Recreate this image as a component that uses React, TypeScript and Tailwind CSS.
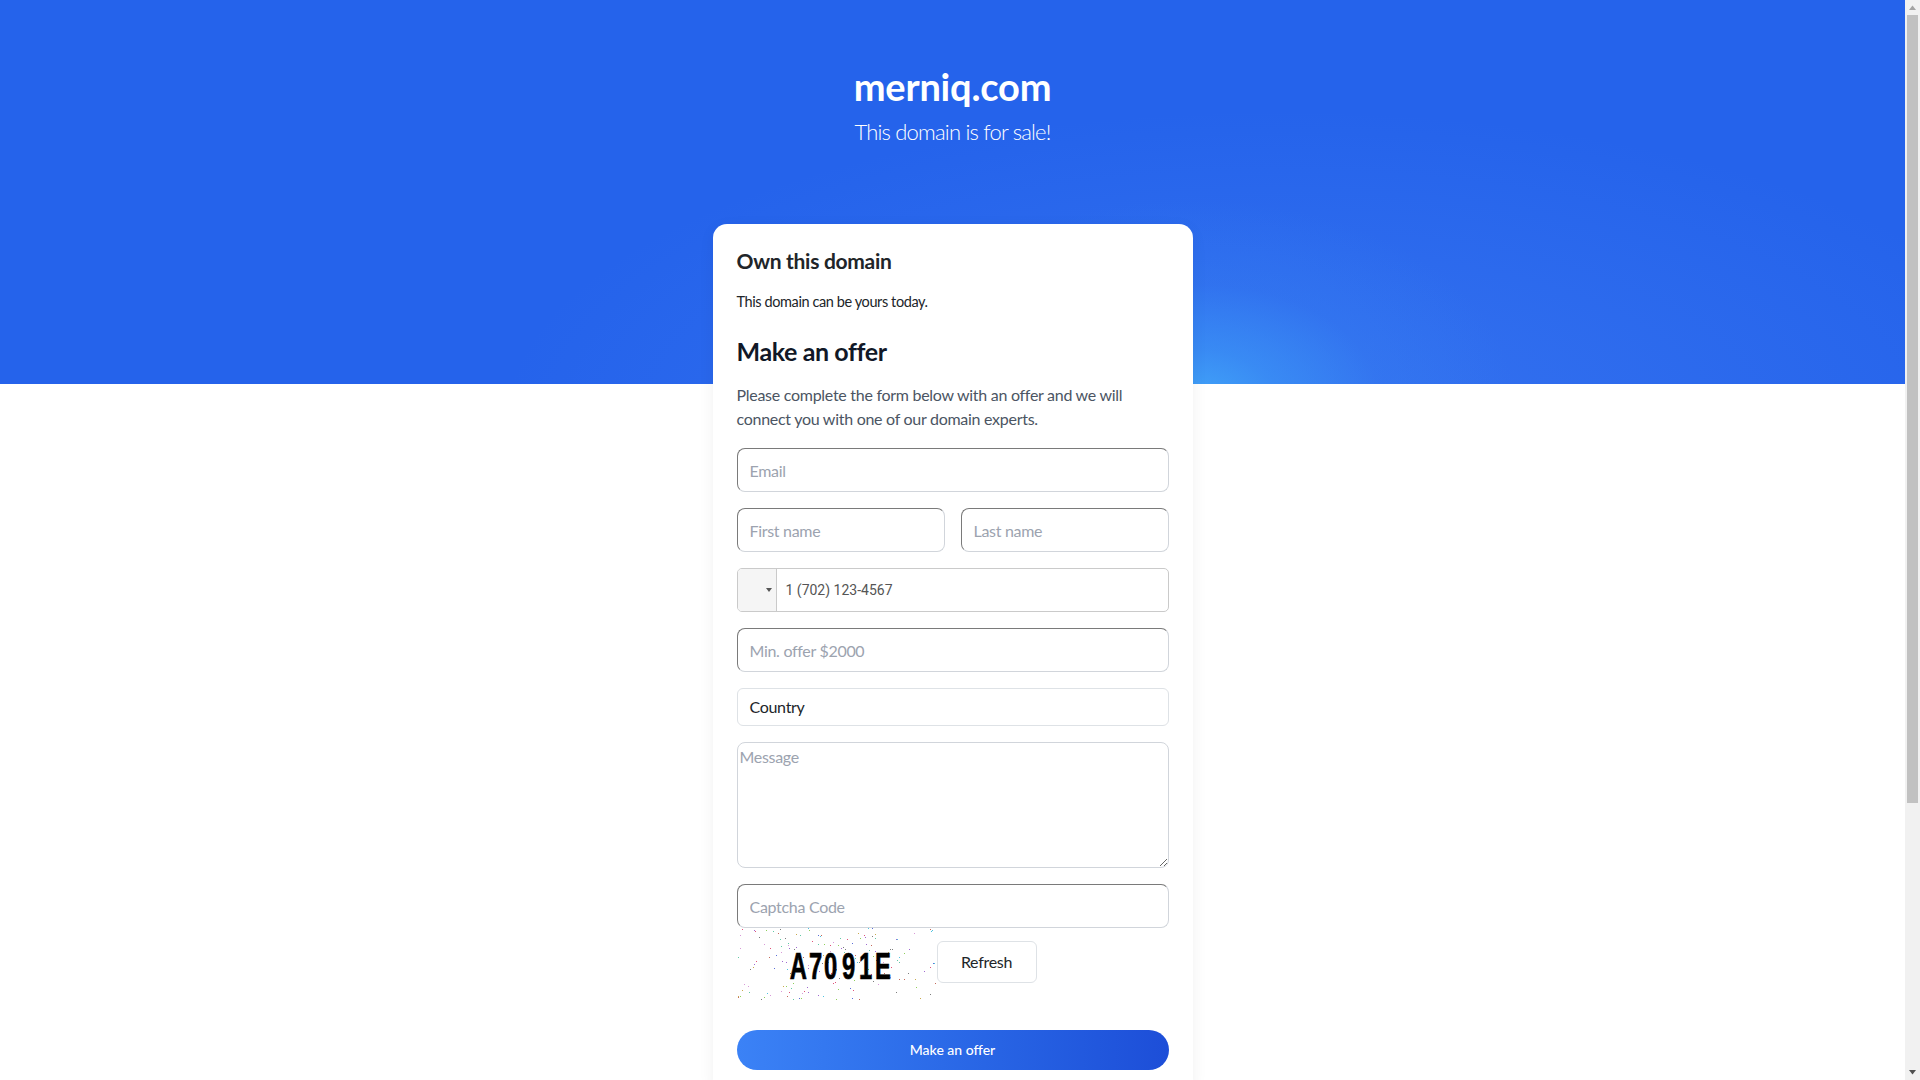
const dotColors = ["#e0527a", "#5b6fd8", "#62c9a5", "#c9a94e", "#a06ad0", "#7d7d7d", "#4fc3e0", "#c46a5a", "#8fd05a", "#d89ad8"];

// captcha speckle, seeded so it stays the same between runs
function makeDots() {
  const dots: { x: number; y: number; c: string }[] = [];
  let seed = 91;
  const next = () => {
    seed = (seed * 16807) % 2147483647;
    return seed / 2147483647;
  };
  for (let i = 0; i < 170; i++) {
    dots.push({
      x: Math.floor(next() * 198) + 1,
      y: Math.floor(next() * 72),
      c: dotColors[Math.floor(next() * dotColors.length)],
    });
  }
  return dots;
}

function Captcha() {
  return (
    <svg width="200" height="74" viewBox="0 0 200 74" className="block shrink-0">
      {makeDots().map((d, i) => (
        <rect key={i} x={d.x} y={d.y} width="1" height="1" fill={d.c} />
      ))}
      <text
        transform="scale(0.66 1)"
        x="80 109 132 159 185 209"
        y="51"
        fontFamily="'Liberation Sans',sans-serif"
        fontWeight="700"
        fontSize="36"
        stroke="#000"
        strokeWidth="0.7"
        fill="#000"
      >
        A7091E
      </text>
    </svg>
  );
}

const inputClass =
  "block w-full h-11 px-3 rounded-lg bg-white border border-t-[#7a7a7a] border-l-[#7a7a7a] border-r-[#d1d5db] border-b-[#d1d5db] text-base tracking-[-0.3px] text-[#212529] outline-none placeholder:text-[#9ca3af]";

export default function App() {
  return (
    <div className="flex h-screen overflow-hidden bg-white [font-family:Lato,sans-serif]">
      <main className="flex-1 min-w-0 overflow-hidden">
        {/* Hero */}
        <section className="h-[384px] pt-[59px] text-center text-white bg-[radial-gradient(ellipse_320px_200px_at_1195px_400px,#41a4f8_0%,rgba(60,150,246,0.7)_25%,rgba(55,130,242,0.3)_58%,rgba(37,99,235,0)_100%),radial-gradient(ellipse_780px_310px_at_1280px_420px,rgba(90,150,250,0.3)_0%,rgba(90,150,250,0.15)_50%,rgba(37,99,235,0)_100%),linear-gradient(#2563eb,#2563eb)]">
          <h1 className="text-[38px] leading-[54px] font-bold tracking-[-0.2px]">merniq.com</h1>
          <p className="mt-[3px] text-[22px] leading-[32px] font-light tracking-[-0.8px]">This domain is for sale!</p>
        </section>

        {/* Card */}
        <div className="w-[480px] mx-auto -mt-[160px] bg-white rounded-t-[14px] rounded-b-xl shadow-[0_4px_16px_rgba(0,0,0,0.06)] px-6 pt-[21px] pb-6">
          <h2 className="text-[21px] leading-[32px] font-bold text-[#212529] tracking-[-0.3px]">Own this domain</h2>
          <p className="mt-[13px] text-[14.5px] leading-6 text-[#212529] tracking-[-0.4px]">This domain can be yours today.</p>
          <h2 className="mt-[19px] text-[25px] leading-[36px] font-bold text-[#111827] tracking-[-0.4px]">Make an offer</h2>
          <p className="mt-[14px] text-base leading-6 text-[#4b5563] tracking-[-0.28px]">
            Please complete the form below with an offer and we will connect you with one of our domain experts.
          </p>

          <form className="mt-[17px] flex flex-col gap-4">
            <input className={inputClass} placeholder="Email" />
            <div className="flex gap-4">
              <input className={inputClass} placeholder="First name" />
              <input className={inputClass} placeholder="Last name" />
            </div>

            {/* Phone */}
            <div className="flex h-11 rounded-[5px] border border-[#cacaca] overflow-hidden">
              <div className="w-[39px] shrink-0 bg-[#f5f5f5] border-r border-[#cacaca] flex items-center justify-end pr-[4px]">
                <span className="w-0 h-0 border-x-[3px] border-x-transparent border-t-[4px] border-t-[#555]" />
              </div>
              <input
                className="flex-1 min-w-0 pl-[9px] text-sm text-[#555] outline-none placeholder:text-[#555] [font-family:Roboto,sans-serif]"
                placeholder="1 (702) 123-4567"
              />
            </div>

            <input className={inputClass} placeholder="Min. offer $2000" />

            {/* Country */}
            <div className="h-[38px] px-3 flex items-center rounded-md border border-[#dee2e6] text-base tracking-[-0.3px] text-[#212529]">Country</div>

            <textarea
              className="block w-full h-[126px] p-[2px] rounded-lg bg-white border border-[#d1d5db] text-base tracking-[-0.3px] text-[#212529] outline-none placeholder:text-[#9ca3af]"
              placeholder="Message"
            />

            <div>
              <input className={inputClass} placeholder="Captcha Code" />
              <div className="flex items-start">
                <Captcha />
                <button
                  type="button"
                  className="mt-[13px] w-[100px] h-[42px] rounded-md border border-[#dee2e6] bg-white text-base tracking-[-0.3px] text-[#212529]"
                >
                  Refresh
                </button>
              </div>
            </div>

            <button
              type="button"
              className="mt-[12px] h-10 rounded-full bg-gradient-to-r from-[#3b82f6] to-[#1d4ed8] text-white text-sm font-medium"
            >
              Make an offer
            </button>
          </form>
        </div>
      </main>

      {/* Page scrollbar */}
      <aside className="w-[15px] shrink-0 bg-[#f1f1f1] flex flex-col items-center">
        <svg width="15" height="15" viewBox="0 0 15 15" className="shrink-0">
          <polygon points="7.5,5.5 11,10 4,10" fill="#a3a3a3" />
        </svg>
        <div className="w-[11px] h-[788px] bg-[#c1c1c1]" />
        <div className="flex-1" />
        <svg width="15" height="15" viewBox="0 0 15 15" className="shrink-0">
          <polygon points="4,5 11,5 7.5,9.5" fill="#505050" />
        </svg>
      </aside>
    </div>
  );
}
